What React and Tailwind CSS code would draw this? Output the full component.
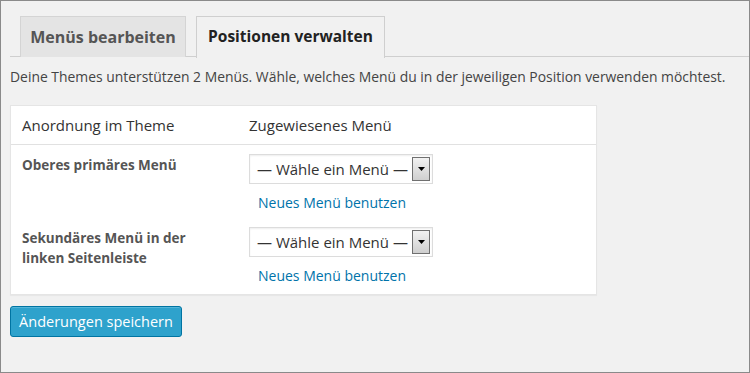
import React from 'react';

const font = { fontFamily: '"Open Sans", "Noto Sans", sans-serif' };

const MenuSelect = () => (
    <div className="flex items-center w-[184px] h-[30px] bg-white border border-[#dcdcdc] shadow-[inset_0_1px_2px_rgba(0,0,0,0.07)] pl-[7px] pr-[2px]">
        <span className="flex-1 text-[15px] text-[#333] leading-none whitespace-nowrap">— Wähle ein Menü —</span>
        <div className="w-[18px] h-[24px] flex items-center justify-center border border-[#707070] bg-gradient-to-b from-[#f2f2f2] to-[#cfcfcf]">
            <svg width="7" height="4" viewBox="0 0 7 4">
                <path d="M0 0 L7 0 L3.5 4 Z" fill="#000" />
            </svg>
        </div>
    </div>
);

const LocationRow = ({ label, last }) => (
    <div className={`flex ${last ? 'pt-[7px] pb-[9px]' : 'pt-[9px] pb-[8px]'}`}>
        <div className="w-[238px] pl-[11px] pt-[1px] text-[13.5px] font-bold text-[#555] leading-[20px]">
            {label}
        </div>
        <div className="flex flex-col">
            <MenuSelect />
            <a className="mt-[10px] ml-[9px] text-[14px] text-[#0073aa] leading-[18px]">Neues Menü benutzen</a>
        </div>
    </div>
);

export default function App() {
    return (
        <div style={font} className="w-[750px] h-[373px] bg-[#f1f1f1] border border-[#8a8a8a] overflow-hidden">
            <div className="pl-[9px] pt-[15px]">
                <div className="flex gap-[10px] pl-[10px] border-b border-[#cfcfcf] h-[41px]">
                    <div className="w-[166px] h-[41px] bg-[#e4e4e4] border border-[#d4d4d4] border-b-0 flex items-center justify-center text-[16px] font-bold text-[#555]">
                        Menüs bearbeiten
                    </div>
                    <div className="w-[189px] h-[42px] bg-[#f1f1f1] border border-[#cfcfcf] border-b-0 flex items-center justify-center text-[15.5px] font-bold text-[#222] pb-[1px]">
                        Positionen verwalten
                    </div>
                </div>
                <p className="mt-[10px] text-[13.9px] text-[#444] leading-[20px] whitespace-nowrap">
                    Deine Themes unterstützen 2 Menüs. Wähle, welches Menü du in der jeweiligen Position verwenden möchtest.
                </p>
                <div className="mt-[18px] w-[587px] bg-white border border-[#e5e5e5] shadow-[0_1px_1px_rgba(0,0,0,0.04)]">
                    <div className="flex h-[39px] items-center border-b border-[#e1e1e1] text-[15px] text-[#333]">
                        <div className="w-[238px] pl-[11px]">Anordnung im Theme</div>
                        <div>Zugewiesenes Menü</div>
                    </div>
                    <LocationRow label="Oberes primäres Menü" />
                    <LocationRow label={<>Sekundäres Menü in der<br />linken Seitenleiste</>} last />
                </div>
                <button className="mt-[11px] w-[172px] h-[31px] rounded-[3px] bg-[#2ea2cc] border border-[#0074a2] shadow-[inset_0_1px_0_rgba(120,200,230,0.5)] text-[14.5px] text-white">
                    Änderungen speichern
                </button>
            </div>
        </div>
    );
}
